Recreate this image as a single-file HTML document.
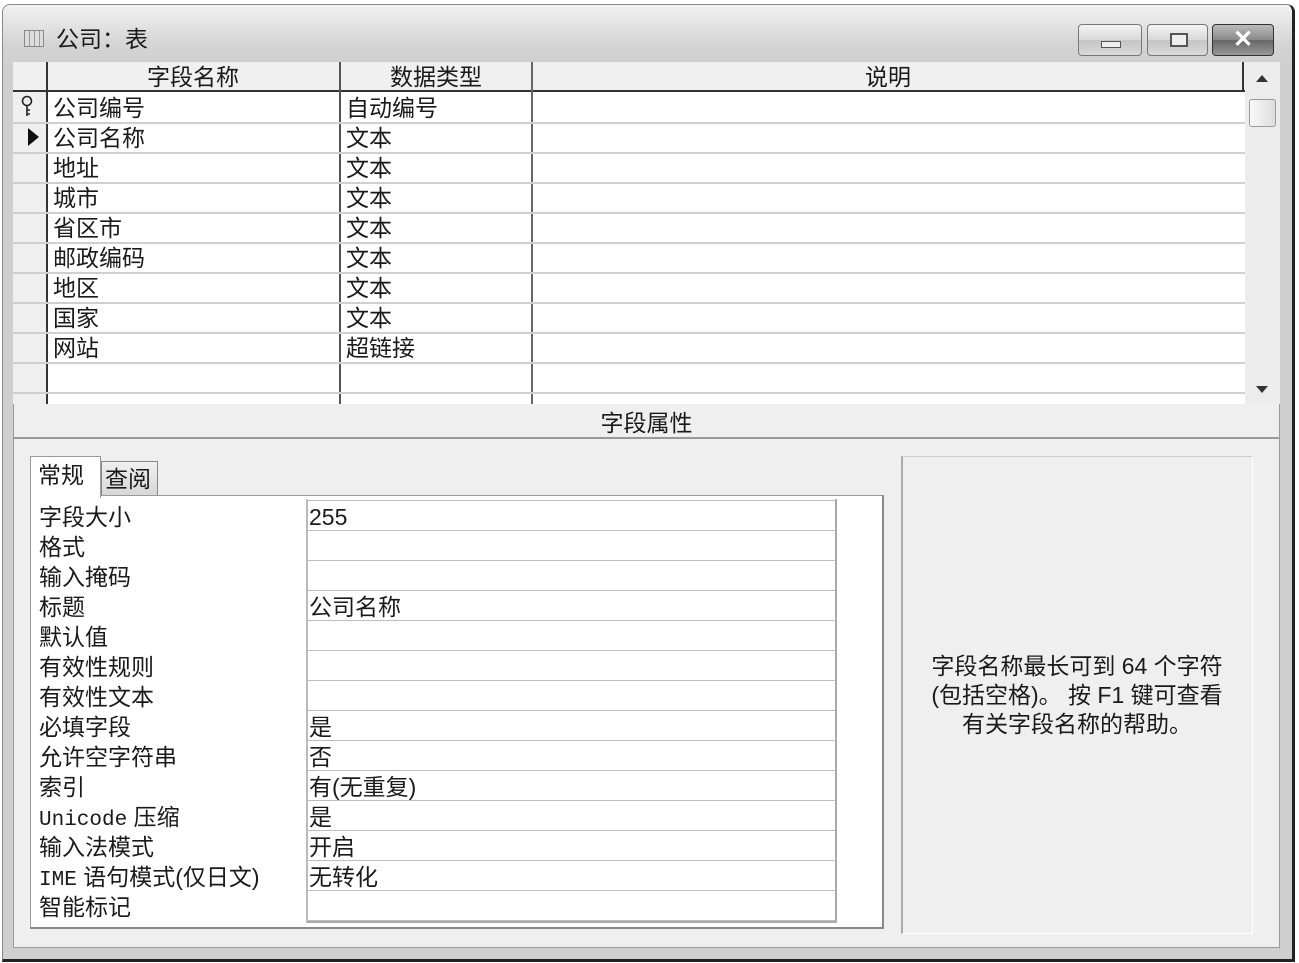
<!DOCTYPE html>
<html><head><meta charset="utf-8"><style>
*{margin:0;padding:0;box-sizing:border-box}
body{width:1299px;height:963px;background:#fff;position:relative;overflow:hidden;font-family:"Liberation Sans","Noto Sans CJK SC",sans-serif;color:#1a1a1a}
.a{position:absolute}
.win{left:2px;top:4px;width:1293px;height:958px;border:1px solid #888;border-right:3px solid #222;border-bottom:3px solid #222;border-radius:8px 8px 0 0;background:linear-gradient(#f2f2f2,#d4d4d4 40px,#cfcfcf 60px,#cfcfcf)}
.client{left:13px;top:62px;width:1267px;height:886px;background:#efefef;border:1px solid #999}
.t{font-size:23px;line-height:30px;white-space:nowrap}
.t div{height:30px;line-height:30px;overflow:visible}
.m{font-family:'Liberation Mono',monospace;font-size:21px;line-height:20px}
.btn{top:24px;height:32px;border:1px solid #777;border-radius:4px;background:linear-gradient(#f4f4f4,#d8d8d8 50%,#c4c4c4 51%,#dadada)}
.hl{height:2px;background:#cfcfcf}
</style></head><body>
<div class="a win"></div>
<div class="a" style="left:24px;top:30px;width:20px;height:17px;border:1px solid #888;background:repeating-linear-gradient(90deg,#ddd 0 4px,#999 4px 5px),#ddd"></div>
<div class="a t" style="left:56px;top:24px;font-size:23px">公司：表</div>
<div class="a btn" style="left:1078px;width:64px"><div class="a" style="left:22px;top:16px;width:20px;height:7px;border:1px solid #555;background:#eee"></div></div>
<div class="a btn" style="left:1147px;width:61px"><div class="a" style="left:22px;top:8px;width:18px;height:14px;border:2px solid #555;background:#eee"></div></div>
<div class="a btn" style="left:1212px;width:62px;background:linear-gradient(#bbb,#888 50%,#666 51%,#999);border-color:#333"><div class="a" style="left:0;width:60px;top:0;text-align:center;font:bold 24px/30px 'Liberation Sans';color:#fff">✕</div></div>
<div class="a client"></div>
<div class="a" style="left:13px;top:62px;width:1232px;height:342px;background:#fff"></div>
<div class="a" style="left:13px;top:62px;width:1232px;height:30px;background:#f0f0f0;border-bottom:2px solid #333"></div>
<div class="a" style="left:13px;top:92px;width:34px;height:312px;background:#efefef"></div>
<div class="a" style="left:1242px;top:62px;width:2px;height:30px;background:#333"></div>
<div class="a" style="left:46px;top:62px;width:2px;height:342px;background:#333"></div>
<div class="a" style="left:339px;top:62px;width:2px;height:342px;background:#555"></div>
<div class="a" style="left:531px;top:62px;width:2px;height:342px;background:#666"></div>
<div class="a t" style="left:47px;top:62px;width:292px;text-align:center">字段名称</div>
<div class="a t" style="left:340px;top:62px;width:192px;text-align:center">数据类型</div>
<div class="a t" style="left:532px;top:62px;width:712px;text-align:center">说明</div>
<div class="a hl" style="left:13px;top:122px;width:1232px"></div>
<div class="a hl" style="left:13px;top:152px;width:1232px"></div>
<div class="a hl" style="left:13px;top:182px;width:1232px"></div>
<div class="a hl" style="left:13px;top:212px;width:1232px"></div>
<div class="a hl" style="left:13px;top:242px;width:1232px"></div>
<div class="a hl" style="left:13px;top:272px;width:1232px"></div>
<div class="a hl" style="left:13px;top:302px;width:1232px"></div>
<div class="a hl" style="left:13px;top:332px;width:1232px"></div>
<div class="a hl" style="left:13px;top:362px;width:1232px"></div>
<div class="a hl" style="left:13px;top:392px;width:1232px"></div>
<svg class="a" style="left:19px;top:95px" width="16" height="24" viewBox="0 0 16 24"><circle cx="8" cy="6" r="4.5" fill="none" stroke="#222" stroke-width="1.6"/><path d="M8 10.5V21M8 15h3M8 19h3" stroke="#222" stroke-width="1.6" fill="none"/></svg>
<div class="a" style="left:28px;top:128px;border-left:11px solid #111;border-top:9px solid transparent;border-bottom:9px solid transparent"></div>
<div class="a t" style="left:53px;top:93px;line-height:30px">公司编号<br>公司名称<br>地址<br>城市<br>省区市<br>邮政编码<br>地区<br>国家<br>网站</div>
<div class="a t" style="left:346px;top:93px;line-height:30px">自动编号<br>文本<br>文本<br>文本<br>文本<br>文本<br>文本<br>文本<br>超链接</div>
<div class="a" style="left:1245px;top:62px;width:35px;height:342px;background:#ececec"></div>
<div class="a" style="left:1256px;top:75px;border-bottom:7px solid #333;border-left:6px solid transparent;border-right:6px solid transparent"></div>
<div class="a" style="left:1249px;top:99px;width:27px;height:28px;border:1px solid #999;border-radius:3px;background:linear-gradient(90deg,#f8f8f8,#ddd)"></div>
<div class="a" style="left:1256px;top:386px;border-top:7px solid #333;border-left:6px solid transparent;border-right:6px solid transparent"></div>
<div class="a t" style="left:13px;top:408px;width:1267px;text-align:center">字段属性</div>
<div class="a" style="left:13px;top:437px;width:1267px;height:2px;background:#999"></div>
<div class="a" style="left:101px;top:461px;width:57px;height:36px;border:1px solid #888;background:linear-gradient(#f0f0f0,#d6d6d6)"></div>
<div class="a t" style="left:105px;top:464px">查阅</div>
<div class="a" style="left:30px;top:495px;width:854px;height:434px;background:#fff;border:1px solid #999;border-right:2px solid #888;border-bottom:2px solid #888"></div>
<div class="a" style="left:30px;top:456px;width:71px;height:42px;background:#fff;border:1px solid #999;border-bottom:none"></div>
<div class="a t" style="left:38px;top:460px">常规</div>
<div class="a" style="left:306px;top:499px;width:531px;height:424px;border-left:2px solid #bbb;border-right:2px solid #aaa;border-bottom:2px solid #aaa;background:repeating-linear-gradient(#fff 0 29px,#bdbdbd 29px 31px,#fff 31px 30px);background-size:100% 30px;background-position:0 2px"></div>
<div class="a t" style="left:39px;top:502px">
<div>字段大小</div><div>格式</div><div>输入掩码</div><div>标题</div><div>默认值</div><div>有效性规则</div><div>有效性文本</div><div>必填字段</div><div>允许空字符串</div><div>索引</div><div><span class="m">Unicode</span> 压缩</div><div>输入法模式</div><div><span class="m">IME</span> 语句模式(仅日文)</div><div>智能标记</div></div>
<div class="a t" style="left:309px;top:502px">
<div>255</div><div></div><div></div><div>公司名称</div><div></div><div></div><div></div><div>是</div><div>否</div><div>有(无重复)</div><div>是</div><div>开启</div><div>无转化</div></div>
<div class="a" style="left:901px;top:456px;width:352px;height:478px;border-left:2px solid #aaa;border-top:1px solid #ccc;border-right:1px solid #fff;border-bottom:1px solid #fff;background:#efefef"></div>
<div class="a t" style="left:903px;top:652px;width:348px;text-align:center;line-height:29px">字段名称最长可到 64 个字符<br>(包括空格)。 按 F1 键可查看<br>有关字段名称的帮助。</div>
</body></html>
